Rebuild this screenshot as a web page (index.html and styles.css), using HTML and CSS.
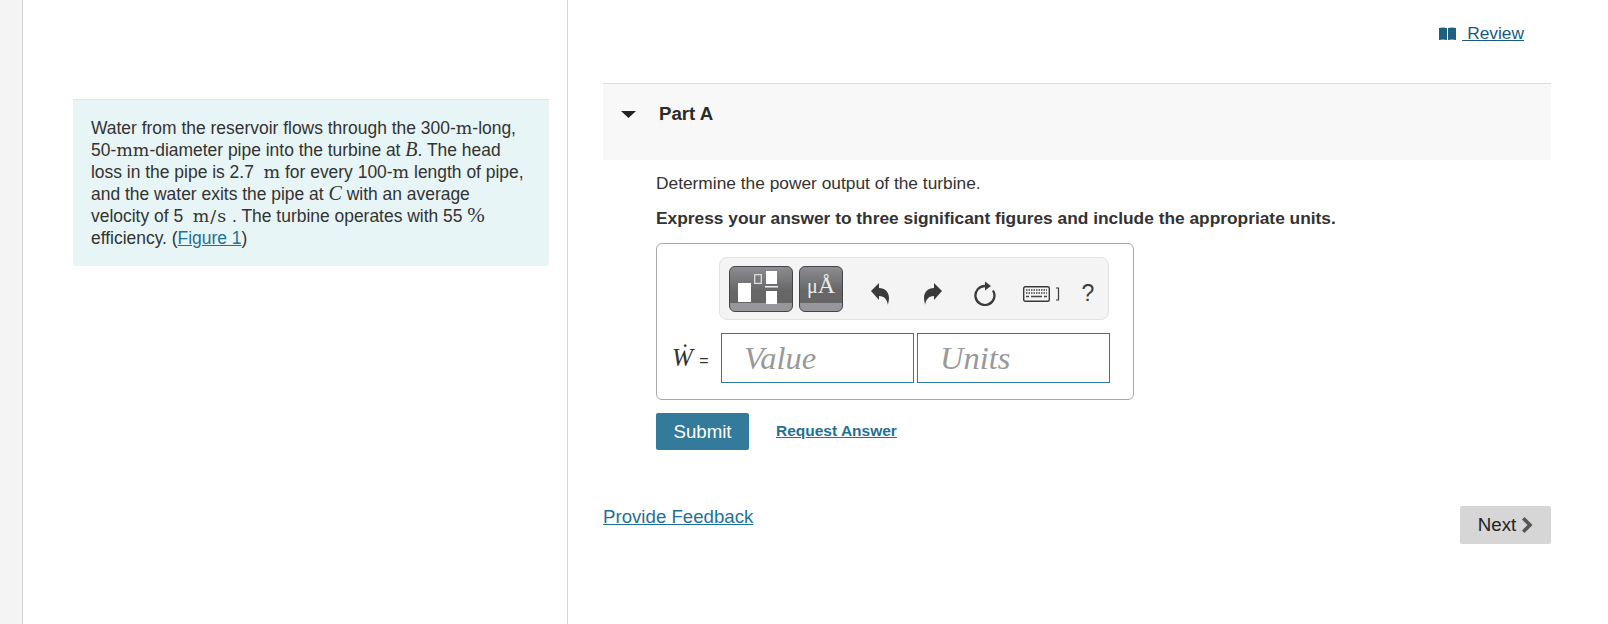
FILE: index.html
```html
<!DOCTYPE html>
<html lang="en">
<head>
    <meta charset="UTF-8">
    <title>Part A</title>
    <link rel="stylesheet" href="styles.css">
</head>
<body>

<div class="gutter"></div>

<div class="intro-col">
    <div class="intro">
        Water from the reservoir flows through the 300-<span class="math">m</span>-long,<br>
        50-<span class="math">mm</span>-diameter pipe into the turbine at <span class="math var">B</span>. The head<br>
        loss in the pipe is 2.7 &nbsp;<span class="math">m</span> for every 100-<span class="math">m</span> length of pipe,<br>
        and the water exits the pipe at <span class="math var">C</span> with an average<br>
        velocity of 5 &nbsp;<span class="math rate">m/s</span> . The turbine operates with 55 <span class="math pct">%</span><br>
        efficiency. (<a href="#">Figure 1</a>)
    </div>
</div>

<div class="main-col">
    <div class="review-row">
        <a href="#" class="review">
            <svg class="book" width="17" height="13" viewBox="0 0 17 13">
                <path d="M0 1q4-1 8 0v12q-4-1-8 0zM9 1q4-1 8 0v12q-4-1-8 0z" fill="#1f5f80"/>
            </svg>
            <span>&nbsp;Review</span>
        </a>
    </div>

    <div class="part-head">
        <svg class="caret" width="15" height="7" viewBox="0 0 15 7"><path d="M0 0h15L7.5 7z" fill="#222"/></svg>
        <span>Part A</span>
    </div>

    <div class="part-body">
        <p class="question">Determine the power output of the turbine.</p>
        <p class="instruct">Express your answer to three significant figures and include the appropriate units.</p>

        <div class="answer-box">
            <div class="toolbar">
                <button class="tpl tpl-frac">
                    <svg width="64" height="46" viewBox="0 0 64 46">
                        <path d="M9 17h13v19H9z" fill="#fff"/>
                        <path d="M25.700 8.700h6.600v8.600h-6.600z" fill="none" stroke="#ddd" stroke-width="1.300"/>
                        <path d="M37 5h11v13H37zM37 25h11v13H37z" fill="#fff"/>
                        <path d="M36 20h13v1.500H36z" fill="#eee"/>
                    </svg>
                </button>
                <button class="tpl tpl-unit"><span class="mu">μ</span>Å</button>
                <span class="tool">
                    <svg width="18" height="22" viewBox="0 0 18 22"><path d="M0 8 8 0v5c6 0 10 4 10 10 0 3-1 5-1 7-1-5-3-9-9-9v4z" fill="#3a3a3a"/></svg>
                </span>
                <span class="tool">
                    <svg width="18" height="22" viewBox="0 0 18 22"><path d="M18 8 10 0v5C4 5 0 9 0 15c0 3 1 5 1 7 1-5 3-9 9-9v4z" fill="#3a3a3a"/></svg>
                </span>
                <span class="tool">
                    <svg width="22" height="25" viewBox="0 0 22 25">
                        <path d="M11 5A9.500 9.500 0 1 0 19 9.500" fill="none" stroke="#3a3a3a" stroke-width="2.300"/>
                        <path d="M11 .5 17 5 11 9.500z" fill="#3a3a3a"/>
                    </svg>
                </span>
                <span class="tool tool-keys">
                    <svg width="37" height="16" viewBox="0 0 37 16">
                        <rect x=".7" y=".7" width="25.600" height="14.600" rx="1.500" fill="#f4f4f4" stroke="#3a3a3a" stroke-width="1.400"/>
                        <path d="M3 4h21M3 7h21" stroke="#444" stroke-width="1.600" stroke-dasharray="1.500 1"/>
                        <path d="M3 10.500h3M8 10.500h11M21 10.500h3" stroke="#444" stroke-width="1.600"/>
                        <path d="M33 2h2.500v12H33" fill="none" stroke="#3a3a3a" stroke-width="1.200"/>
                    </svg>
                </span>
                <span class="tool tool-help">?</span>
            </div>
            <div class="entry-row">
                <span class="entry-label"><span class="var-w">Ẇ</span> =</span>
                <input class="entry" placeholder="Value">
                <input class="entry" placeholder="Units">
            </div>
        </div>

        <div class="actions">
            <button class="submit">Submit</button>
            <a href="#" class="request">Request Answer</a>
        </div>
    </div>

    <div class="footer-row">
        <a href="#" class="feedback">Provide Feedback</a>
        <button class="next">Next
            <svg width="12" height="16" viewBox="0 0 12 16"><path d="M1 2.500 3.500 0 11.500 8 3.500 16 1 13.500 6.500 8z" fill="#555"/></svg>
        </button>
    </div>
</div>

</body>
</html>
```

FILE: styles.css
```css
/* Page frame */
html, body {
    height: 100%;
}

body {
    display: flex;
    margin: 0;
    min-height: 624px;
    overflow: hidden;
    background: #fff;
    color: #333;
    font-family: "Liberation Sans", Arial, sans-serif;
    font-size: 17.330px;
}

a {
    color: #1f7196;
}

.gutter {
    width: 22px;
    background: #f4f4f4;
    border-right: 1px solid #d6d6d6;
}

/* Left column with the problem text */
.intro-col {
    width: 545px;
    padding: 99px 18px 0 50px;
    box-sizing: border-box;
    border-right: 1px solid #d6d6d6;
}

.intro {
    padding: 17px 0 0 18px;
    height: 167px;
    box-sizing: border-box;
    background: #e8f5f6;
    border-top: 1px solid #dde8e8;
    font-size: 17.450px;
    line-height: 22px;
}

.math {
    font-family: "DejaVu Serif", serif;
    font-size: 17.500px;
    font-weight: 300;
    line-height: 1;
}

.rate {
    letter-spacing: 1px;
}

.var {
    font-family: "Liberation Serif", "Times New Roman", serif;
    font-style: italic;
    font-size: 20px;
}

.pct {
    font-family: "Liberation Serif", "Times New Roman", serif;
    font-size: 21px;
}

/* Right column */
.main-col {
    flex: 1;
    padding: 0 57px 0 35px;
    min-width: 0;
}

.review-row {
    display: flex;
    justify-content: flex-end;
    height: 83px;
    padding: 23px 27px 0 0;
    box-sizing: border-box;
}

.review {
    display: flex;
    align-items: center;
    height: 20px;
    color: #1a5a7c;
}

.book {
    margin-right: 6px;
}

.review span {
    text-decoration: underline;
}

.part-head {
    display: flex;
    height: 77px;
    box-sizing: border-box;
    padding: 19px 0 0 18px;
    background: #f8f8f8;
    border-top: 1px solid #ddd;
    font-weight: bold;
    font-size: 18.670px;
    line-height: 21px;
    color: #2b2b2b;
}

.caret {
    margin: 8px 23px 0 0;
}

.part-body {
    padding: 13px 0 0 53px;
}

.question {
    margin: 0 0 15px;
    line-height: 20px;
}

.instruct {
    margin: 0 0 15px;
    line-height: 20px;
    font-weight: bold;
}

/* Answer box */
.answer-box {
    width: 478px;
    height: 157px;
    box-sizing: border-box;
    padding: 13px 23px 0 15px;
    border: 1px solid #aaa;
    border-radius: 6px;
}

.toolbar {
    display: flex;
    align-items: center;
    width: 390px;
    height: 63px;
    margin-left: 47px;
    padding-left: 9px;
    box-sizing: border-box;
    background: #f4f4f4;
    border: 1px solid #e2e2e2;
    border-radius: 8px;
}

.tpl {
    flex: none;
    height: 46px;
    padding: 0;
    border: 1px solid #444;
    border-radius: 6px;
    background: linear-gradient(#8d8d92, #666 55%, #666 82%, #97979b 82%);
    color: #eee;
}

.tpl-frac {
    width: 64px;
}

.tpl-frac svg {
    display: block;
    margin: -1px;
}

.tpl-unit {
    width: 44px;
    margin-left: 6px;
    padding-bottom: 6px;
    font-family: "Liberation Serif", serif;
    font-size: 24px;
}

.mu {
    font-size: 20px;
}

.tool {
    flex: none;
    display: flex;
    justify-content: center;
    align-items: center;
    width: 52.500px;
    height: 48px;
    margin-top: 10px;
}

.tool:nth-child(3) {
    margin-left: 11px;
}

.tool-keys {
    justify-content: flex-start;
    padding-left: 11px;
    box-sizing: border-box;
}

.tool-help {
    width: 36px;
    margin-left: 6px;
    font-size: 23px;
    color: #3a3a3a;
}

.entry-row {
    display: flex;
    align-items: center;
    gap: 3px;
    margin-top: 13px;
}

.entry-label {
    width: 49px;
    font-size: 16px;
    white-space: nowrap;
}

.var-w {
    margin-right: 2px;
    font-family: "Liberation Serif", serif;
    font-style: italic;
    font-size: 25px;
}

.entry {
    width: 193px;
    height: 50px;
    padding: 0 0 0 22px;
    box-sizing: border-box;
    border: 1px solid #337a9a;
    border-radius: 0;
    outline: none;
    font-family: "Liberation Serif", serif;
    font-style: italic;
    font-size: 32.500px;
}

.entry::placeholder {
    color: #999;
    opacity: 1;
}

/* Buttons below the box */
.actions {
    display: flex;
    align-items: center;
    margin-top: 13px;
}

.submit {
    width: 93px;
    height: 37px;
    padding: 0;
    border: none;
    border-radius: 2px;
    background: #337a9b;
    color: #fff;
    font-family: inherit;
    font-size: 18.670px;
}

.request {
    margin: 0 0 2px 27px;
    font-size: 15.500px;
    font-weight: bold;
}

.footer-row {
    display: flex;
    justify-content: space-between;
    align-items: flex-start;
    margin-top: 56px;
}

.feedback {
    font-size: 18.670px;
    line-height: 21px;
}

.next {
    display: flex;
    align-items: center;
    justify-content: center;
    gap: 5px;
    width: 91px;
    height: 38px;
    padding: 0;
    border: none;
    border-radius: 2px;
    background: #d6d6d6;
    color: #222;
    font-family: inherit;
    font-size: 18.670px;
}
```
